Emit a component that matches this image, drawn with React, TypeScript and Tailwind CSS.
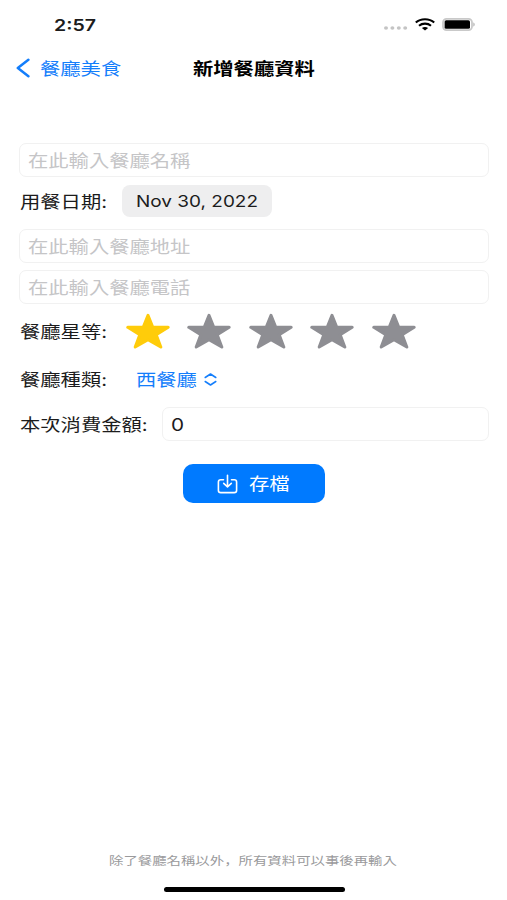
import React, { useState } from 'react'
import clsx from 'clsx'

type TextProps = {
    children: React.ReactNode
    className?: string
}

// wide lettering, stretched from its left edge
const Text: React.FC<TextProps> = ({ children, className }) => (
    <span className={clsx('inline-block origin-left scale-x-[1.22] whitespace-nowrap pt-[2px]', className)}>{children}</span>
)

const Field: React.FC<{ placeholder?: string; value?: string; className?: string }> = ({ placeholder, value, className }) => (
    <div className={clsx('flex h-[34px] items-center rounded-[7px] border-[1.5px] border-[#f1f1f1] pl-[8px]', className)}>
        {value ? <Text className="text-[17px]">{value}</Text> : <Text className="text-[#c5c5c7]">{placeholder}</Text>}
    </div>
)

const Star: React.FC<{ active: boolean; onClick: () => void }> = ({ active, onClick }) => (
    <button onClick={onClick} className={active ? 'text-[#ffcc0a]' : 'text-[#8e8e93]'}>
        <svg width="44" height="36" viewBox="0 0 44 36" fill="currentColor" stroke="currentColor" strokeWidth="3" strokeLinejoin="round">
            <path d="M22 2.3 L26.8 14.3 L42.2 14.3 L30.2 21.8 L34.8 34 L22 26.8 L9.2 34 L13.8 21.8 L1.8 14.3 L17.2 14.3 Z" />
        </svg>
    </button>
)

const StatusBar: React.FC = () => (
    <div className="flex h-[48px] items-center justify-between pr-[32px] pl-[54px]">
        <Text className="text-[16px] font-semibold">2:57</Text>
        <div className="flex items-center">
            <svg className="mt-[8px]" width="24" height="4" viewBox="0 0 24 4" fill="#c4c4c4">
                <ellipse cx="2" cy="2" rx="2" ry="1.7" />
                <ellipse cx="8.4" cy="2" rx="2" ry="1.7" />
                <ellipse cx="14.8" cy="2" rx="2" ry="1.7" />
                <ellipse cx="21.2" cy="2" rx="2" ry="1.7" />
            </svg>
            <svg className="ml-[7px]" width="20" height="13" viewBox="0 0 20 13" fill="none" stroke="#000" strokeWidth="2.1">
                <path d="M0.8 4.6 C5.6 0.1 14.4 0.1 19.2 4.6" />
                <path d="M4 7.7 C7.4 4.9 12.6 4.9 16 7.7" />
                <path d="M6.9 10.1 C8.7 8.7 11.3 8.7 13.1 10.1 L10 12.6 Z" fill="#000" stroke="none" />
            </svg>
            <svg className="ml-[7px]" width="33" height="13" viewBox="0 0 33 13">
                <rect x="1" y="0.9" width="29" height="11.2" rx="3.5" fill="#fff" stroke="#c9c9c9" strokeWidth="1.8" />
                <rect x="2.6" y="2.2" width="25.4" height="8.6" rx="1.6" fill="#000" />
                <path d="M31.3 4.5 C33.2 5.2 33.2 7.8 31.3 8.5 Z" fill="#b5b5b5" />
            </svg>
        </div>
    </div>
)

const App: React.FC = () => {
    const [stars, setStars] = useState<number>(1)

    return (
        <div className="flex h-[900px] w-[507px] flex-col overflow-hidden bg-white text-[16.65px] leading-none text-[#1c1c1c] [font-family:Inter,'Noto_Sans_CJK_TC',sans-serif]">
            <StatusBar />
            <div className="flex h-[40px] items-center">
                <button className="flex w-[192.5px] items-center pl-[16px] text-[#147efb]">
                    <svg width="14" height="20" viewBox="0 0 14 20" fill="none" stroke="currentColor" strokeWidth="2.5" strokeLinecap="round" strokeLinejoin="round">
                        <path d="M12.4 1.8 L1.8 10 L12.4 18.2" />
                    </svg>
                    <Text className="ml-[10px]">餐廳美食</Text>
                </button>
                <Text className="font-bold text-black">新增餐廳資料</Text>
            </div>

            <div className="mt-[55px] flex flex-col pr-[18px] pl-[19px]">
                <Field placeholder="在此輸入餐廳名稱" />
                <div className="mt-[8px] flex h-[32px] items-center">
                    <div className="w-[103px] pl-px">
                        <Text>用餐日期:</Text>
                    </div>
                    <div className="flex h-[32px] w-[150px] items-center rounded-[8px] bg-[#eeeeef] pl-[14px]">
                        <span className="inline-block origin-left scale-x-[1.15] pt-px text-[16.5px] whitespace-nowrap">Nov 30, 2022</span>
                    </div>
                </div>
                <Field className="mt-[12px]" placeholder="在此輸入餐廳地址" />
                <Field className="mt-[7px]" placeholder="在此輸入餐廳電話" />
                <div className="mt-[9px] flex h-[36px] items-center">
                    <div className="w-[106.8px] pl-px">
                        <Text>餐廳星等:</Text>
                    </div>
                    <div className="flex gap-[17.5px]">
                        {[1, 2, 3, 4, 5].map((n) => (
                            <Star key={n} active={n <= stars} onClick={() => setStars(n)} />
                        ))}
                    </div>
                </div>
                <div className="mt-[14px] flex h-[32px] items-center">
                    <div className="w-[117px] pl-px">
                        <Text>餐廳種類:</Text>
                    </div>
                    <button className="flex items-center text-[#147efb]">
                        <span className="w-[68px] text-left">
                            <Text>西餐廳</Text>
                        </span>
                        <svg width="13" height="13" viewBox="0 0 13 13" fill="none" stroke="currentColor" strokeWidth="1.5" strokeLinecap="round" strokeLinejoin="round">
                            <path d="M1.2 4.5 L6.5 1 L11.8 4.5" />
                            <path d="M1.2 8.5 L6.5 12 L11.8 8.5" />
                        </svg>
                    </button>
                </div>
                <div className="mt-[12px] flex items-center">
                    <div className="w-[143px] pl-px">
                        <Text>本次消費金額:</Text>
                    </div>
                    <Field className="flex-1" value="0" />
                </div>
            </div>

            <button className="mt-[23px] flex h-[39px] w-[142px] items-center self-center rounded-[10px] bg-[#007aff] pl-[34px] text-white">
                <svg width="21" height="20" viewBox="0 0 21 20" fill="none" stroke="currentColor" strokeWidth="1.6" strokeLinecap="round" strokeLinejoin="round">
                    <path d="M6.5 5.8 H3.8 Q1.4 5.8 1.4 8 V16.4 Q1.4 18.6 3.8 18.6 H17.2 Q19.6 18.6 19.6 16.4 V8 Q19.6 5.8 17.2 5.8 H14.5" />
                    <path d="M10.5 1.2 V12.6 M6.7 9.4 L10.5 12.8 L14.3 9.4" />
                </svg>
                <Text className="ml-[11px]">存檔</Text>
            </button>

            <div className="mt-auto flex h-[14px] items-center pl-[109px] text-[11.8px] text-[#9a9a9c]">
                <Text className="pt-px">
                    除了餐廳名稱以外<span lang="zh-Hans" className="[font-family:'Noto_Sans_CJK_SC',sans-serif]">，</span>所有資料可以事後再輸入
                </Text>
            </div>
            <div className="mt-[20px] mr-[162px] mb-[8px] h-[5px] w-[181px] self-end rounded-full bg-black" />
        </div>
    )
}

export default App
